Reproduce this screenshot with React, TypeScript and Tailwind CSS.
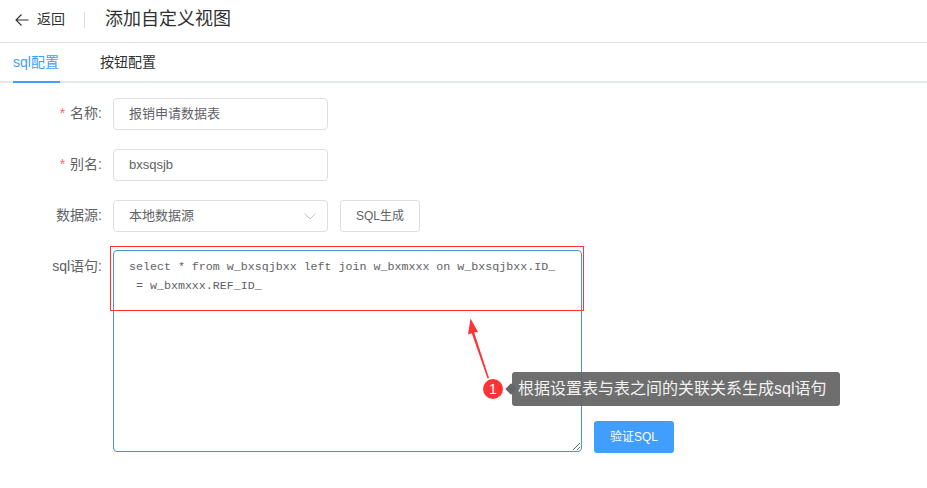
const SANS = "font-['Liberation_Sans','Noto_Sans_CJK_SC',sans-serif]"

const SQL_TEXT =
  'select * from w_bxsqjbxx left join w_bxmxxx on w_bxsqjbxx.ID_\n = w_bxmxxx.REF_ID_'

function FieldLabel({ text, required }: { text: string; required?: boolean }) {
  return (
    <label className="block w-[102px] shrink-0 pb-[1px] text-right text-[14px] leading-[31px] text-[#606266]">
      {required && <span className="mr-[5px] text-[#f56c6c]">*</span>}
      {text}:
    </label>
  )
}

function TextBox({ value }: { value: string }) {
  return (
    <div className="ml-[11px] flex h-[32px] w-[215px] items-center rounded-[4px] border border-[#dcdfe6] bg-white pb-[1px] pl-[15px] text-[13px] text-[#606266]">
      {value}
    </div>
  )
}

export default function App() {
  return (
    <div className={`relative h-[488px] w-[927px] overflow-hidden bg-white ${SANS}`}>
      <header className="flex h-[43px] items-center border-b border-[#dcdfe6] pb-[3px]">
        <svg className="ml-[15px] h-[14px] w-[14px] text-[#303133]" viewBox="0 0 14 14" fill="none" stroke="currentColor" strokeWidth="1.1">
          <path d="M13.5 7H1M6.5 1.5L1 7l5.500 5.500" />
        </svg>
        <span className="ml-[8px] text-[14px] text-[#303133]">返回</span>
        <span className="ml-[19px] h-[16px] w-px bg-[#dcdfe6]" />
        <h1 className="ml-[20px] text-[18px] font-normal text-[#303133]">添加自定义视图</h1>
      </header>

      <nav className="flex h-[40px] border-b-2 border-[#e4e7ed] pl-[13px] text-[14px]">
        <div className="-mb-[2px] flex h-[40px] w-[47px] items-center border-b-2 border-[#409eff] text-[#409eff]">
          sql配置
        </div>
        <div className="ml-[40px] flex h-[38px] items-center pt-[1px] text-[#303133]">按钮配置</div>
      </nav>

      <form className="flex flex-col gap-[19px] pt-[15px]">
        <div className="flex">
          <FieldLabel text="名称" required />
          <TextBox value="报销申请数据表" />
        </div>
        <div className="flex">
          <FieldLabel text="别名" required />
          <TextBox value="bxsqsjb" />
        </div>
        <div className="flex">
          <FieldLabel text="数据源" />
          <div className="ml-[11px] flex h-[32px] w-[215px] items-center justify-between rounded-[4px] border border-[#dcdfe6] bg-white pl-[15px] pr-[11px] text-[13px] text-[#606266]">
            本地数据源
            <svg className="h-[7px] w-[12px] text-[#c0c4cc]" viewBox="0 0 12 7" fill="none" stroke="currentColor" strokeWidth="1">
              <path d="M.5.5L6 6l5.500-5.500" />
            </svg>
          </div>
          <button type="button" className="ml-[12px] h-[32px] w-[80px] rounded-[3px] border border-[#dcdfe6] bg-white text-[12px] text-[#606266]">
            SQL生成
          </button>
        </div>
        <div className="-mt-[1px] flex">
          <div className="w-[102px] shrink-0 pt-[1px]">
            <FieldLabel text="sql语句" />
          </div>
          <textarea
            readOnly
            value={SQL_TEXT}
            className="ml-[11px] h-[202px] w-[469px] rounded-[4px] border border-[#4a90d9] bg-white px-[15px] py-[6px] font-['Liberation_Mono',monospace] text-[11.65px] leading-[19px] whitespace-pre text-[#606266] outline-none"
          />
          <button type="button" className="ml-[12px] mt-[171px] h-[32px] w-[80px] rounded-[3px] bg-[#409eff] text-[12px] text-white">
            验证SQL
          </button>
        </div>
      </form>

      {/* annotation layer */}
      <div className="absolute left-[110px] top-[246px] h-[65px] w-[474px] border border-[#ff3333]" />
      <svg className="absolute left-[460px] top-[310px] h-[80px] w-[50px]" viewBox="0 0 50 80" fill="#ff3333" stroke="none">
        <path d="M10.500 8.500 L18 22 L14.200 22.500 L29 68 L27.500 68.500 L11.800 23.300 L8 24.500 Z" />
      </svg>
      <div className="absolute left-[483px] top-[379px] flex h-[20px] w-[20px] items-center justify-center rounded-full bg-[#ff3333] text-[14px] text-white">
        1
      </div>
      <div className="absolute left-[507px] top-[385px] h-[8px] w-[8px] rotate-45 bg-[#666666]" />
      <div className="absolute left-[512px] top-[372px] flex h-[34px] w-[328px] items-center rounded-[3px] bg-[#666666]/95 pl-[6px] text-[16px] text-[#f2f2f2]">
        根据设置表与表之间的关联关系生成sql语句
      </div>
    </div>
  )
}
